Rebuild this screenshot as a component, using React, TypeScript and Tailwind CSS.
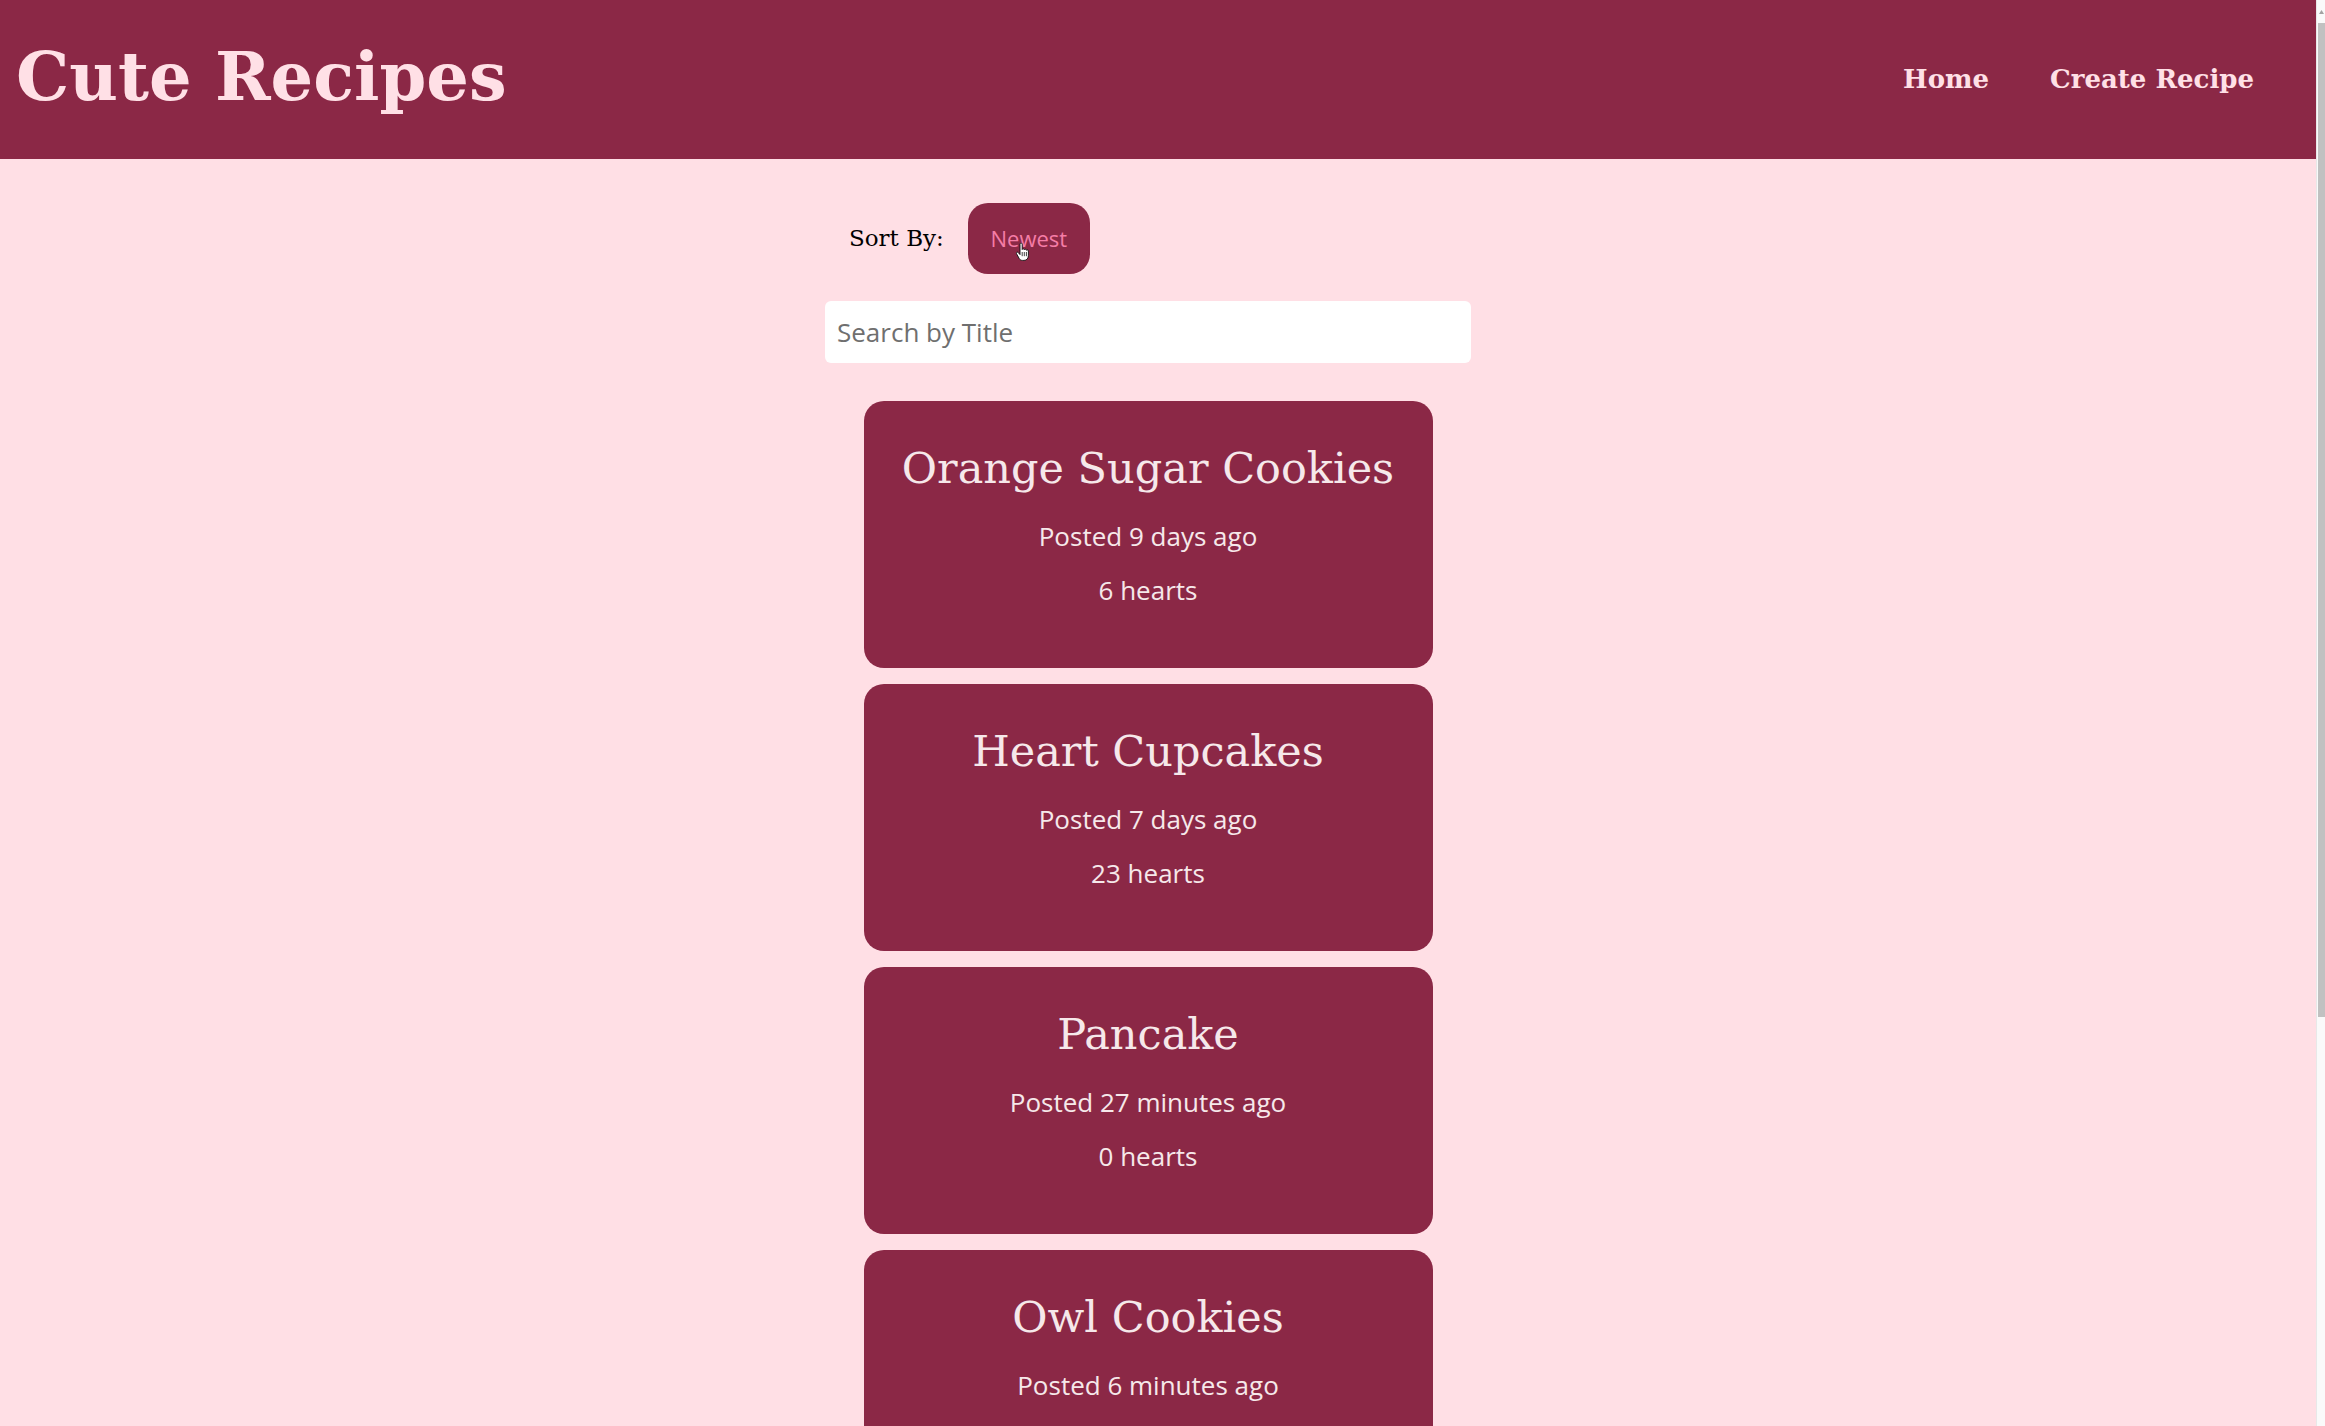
import React from 'react';

const serif = "font-['DejaVu_Serif','Liberation_Serif',serif]";
const sans = "font-['Open_Sans','DejaVu_Sans',sans-serif]";

const recipes = [
  { title: 'Orange Sugar Cookies', posted: 'Posted 9 days ago', hearts: '6 hearts' },
  { title: 'Heart Cupcakes', posted: 'Posted 7 days ago', hearts: '23 hearts' },
  { title: 'Pancake', posted: 'Posted 27 minutes ago', hearts: '0 hearts' },
  { title: 'Owl Cookies', posted: 'Posted 6 minutes ago', hearts: '3 hearts' },
];

const RecipeCard = ({ title, posted, hearts }: { title: string; posted: string; hearts: string }) => (
  <div className="h-[267px] shrink-0 rounded-[20px] bg-[#8b2846] text-[#f6e8ea] flex flex-col items-center pt-[39px]">
    <h2 className={`${serif} text-[43px] leading-[56px]`}>{title}</h2>
    <p className={`${sans} text-[26px] leading-[34px] mt-[23px]`}>{posted}</p>
    <p className={`${sans} text-[26px] leading-[34px] mt-[20px]`}>{hearts}</p>
  </div>
);

const HandCursor = () => (
  <svg width="13" height="19" viewBox="0 0 13 19" className="absolute left-[48px] top-[40px]">
    <path
      d="M4 1.2c0-.7.5-1.2 1.1-1.2s1.1.5 1.1 1.2v5.3c.2-.5.6-.7 1.1-.7.6 0 1 .4 1.1 1 .2-.4.6-.6 1-.6.6 0 1.1.5 1.1 1.1.2-.3.5-.4.9-.4.6 0 1 .5 1 1.1v4.3c0 2.9-1.5 5.1-4.4 5.1H6.4c-1.5 0-2.4-.7-3.2-1.900L.5 10.7c-.3-.5-.2-1.100.3-1.400.5-.3 1.100-.2 1.400.2L4 11.6V1.2z"
      fill="#fff"
      stroke="#111"
      strokeWidth="0.9"
    />
    <path d="M6.2 9v4.2M8.3 9v4.2M10.4 9v4.2" stroke="#111" strokeWidth="0.8" />
  </svg>
);

const App = () => {
  return (
    <div className="flex h-screen w-full overflow-hidden bg-[#ffdfe5]">
      <div className="flex-1 min-w-0 overflow-hidden">
        <header className="h-[159px] bg-[#8b2846] flex items-center justify-between pl-[16px] pr-[62px]">
          <h1 className={`${serif} font-bold text-[67px] leading-none text-[#ffe0e6] pb-[6px]`}>Cute Recipes</h1>
          <nav className={`${serif} font-bold text-[26px] text-[#ffe0e6] flex gap-[61px]`}>
            <a href="#">Home</a>
            <a href="#">Create Recipe</a>
          </nav>
        </header>

        <main className="flex flex-col items-center pr-5 pt-[44px]">
          <div className="w-[646px]">
            <div className="flex items-center gap-6 pl-6">
              <span className={`${serif} text-[23px] text-black`}>Sort By:</span>
              <button className={`${sans} relative h-[71px] w-[122px] rounded-[20px] bg-[#8b2846] text-[#f57da6] text-[22px]`}>
                Newest
                <HandCursor />
              </button>
            </div>
            <input
              type="text"
              placeholder="Search by Title"
              className={`${sans} mt-[27px] w-full h-[62px] rounded-[6px] bg-white px-3 text-[26px] text-[#333] placeholder:text-[#6f6f6f] outline-none`}
            />
          </div>

          <div className="mt-[38px] flex flex-col gap-4 w-[569px]">
            {recipes.map((r) => (
              <RecipeCard key={r.title} {...r} />
            ))}
          </div>
        </main>
      </div>

      <div className="w-[9px] shrink-0 bg-[#fafafa] border-l border-[#e8e8e8] flex flex-col items-center">
        <div className="h-[23px] flex items-start pt-[10px]">
          <svg width="5" height="4" viewBox="0 0 5 4">
            <path d="M0 4 L2.5 0 L5 4 Z" fill="#a3a3a3" />
          </svg>
        </div>
        <div className="w-[7px] ml-[1px] h-[994px] bg-[#c1c1c1]" />
      </div>
    </div>
  );
};

export default App;
